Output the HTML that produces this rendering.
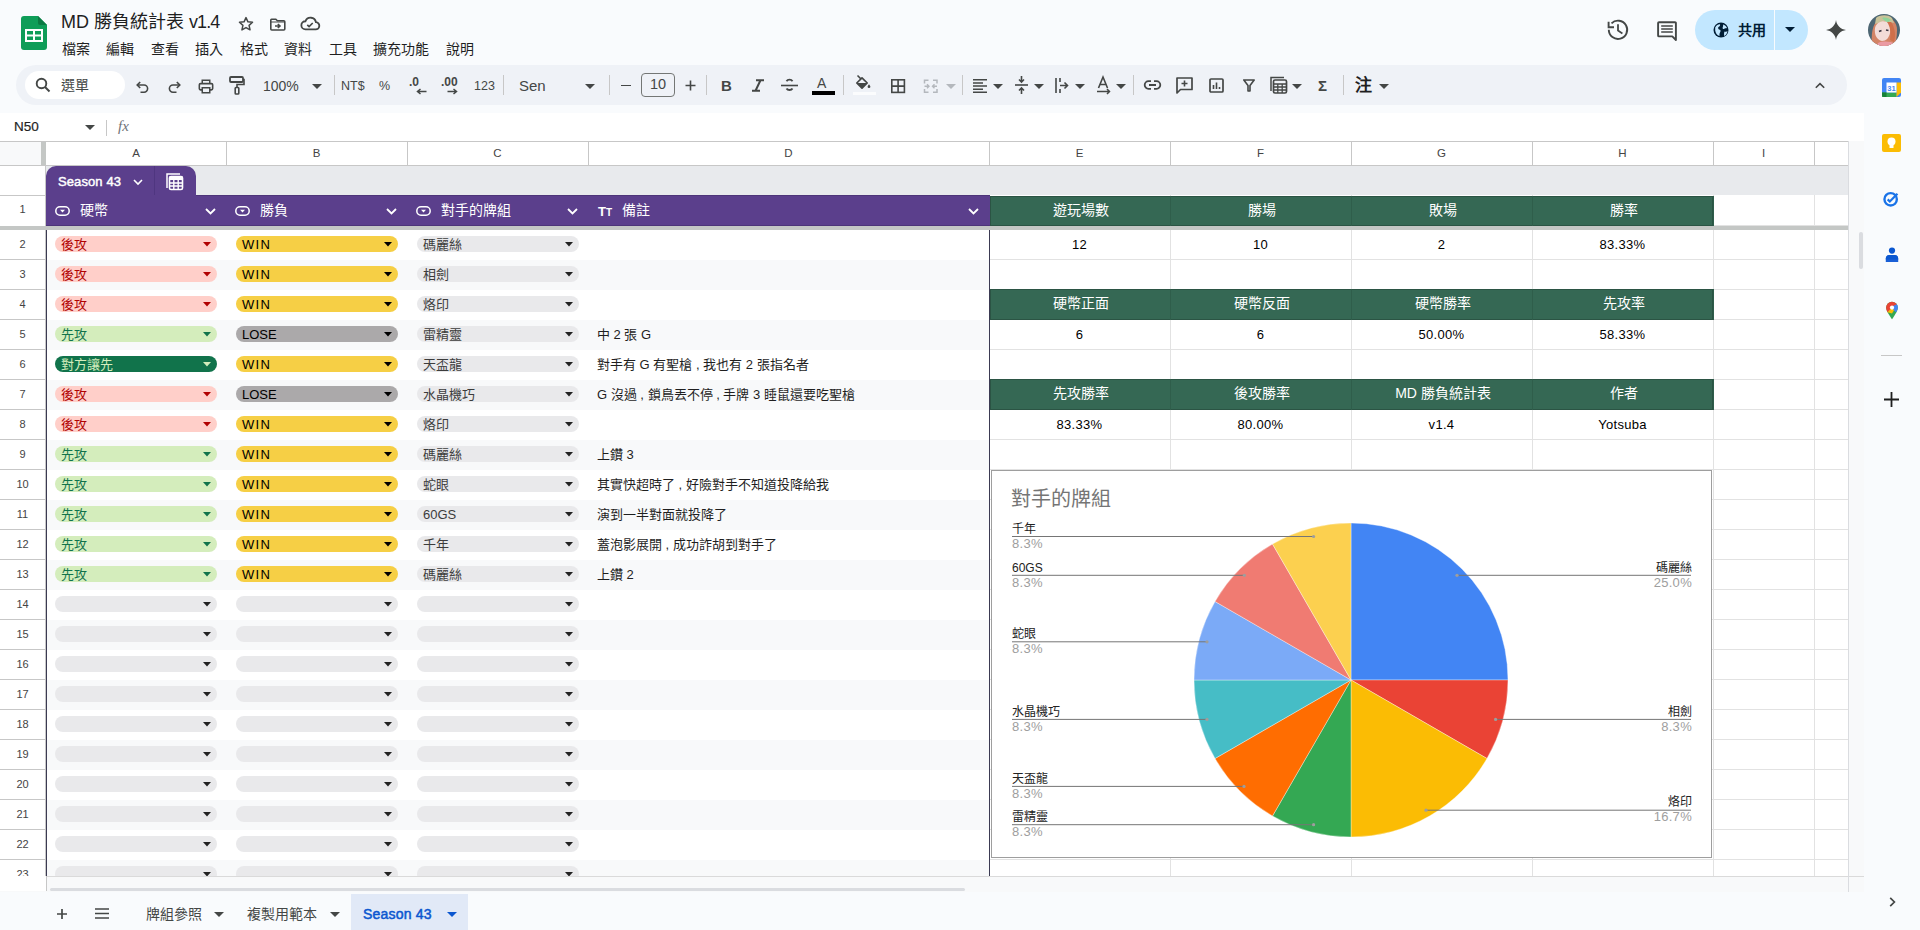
<!DOCTYPE html><html lang="zh-TW"><head><meta charset="utf-8"><title>MD</title><style>
*{margin:0;padding:0;box-sizing:border-box}
html,body{width:1920px;height:930px;overflow:hidden;background:#f9fbfd;font-family:"Liberation Sans",sans-serif;color:#1f1f1f}
.ab{position:absolute}
.t{position:absolute;white-space:nowrap;line-height:1}
svg{position:absolute;overflow:visible}
</style></head><body>
<svg style="left:21px;top:16px" width="26" height="34" viewBox="0 0 26 34"><path d="M3 0H17L26 9V31Q26 34 23 34H3Q0 34 0 31V3Q0 0 3 0Z" fill="#0f9d58"/><path d="M17 0L26 9H19Q17 9 17 7Z" fill="#0b7a43"/><rect x="5" y="14" width="16" height="11" fill="none" stroke="#fff" stroke-width="2"/><path d="M5 19.5H21M13 14V25" stroke="#fff" stroke-width="2"/></svg>
<div class="t" style="left:61px;top:13px;font-size:18px;color:#1f1f1f">MD 勝負統計表 <span style="letter-spacing:-0.9px">v1.4</span></div>
<svg style="left:237px;top:15px" width="18" height="18" viewBox="0 0 24 24"><path d="M12 3.5l2.6 5.6 6.1.6-4.6 4.1 1.3 6L12 16.8l-5.4 3 1.3-6L3.3 9.7l6.1-.6z" fill="none" stroke="#444746" stroke-width="2" stroke-linejoin="round"/></svg>
<svg style="left:270px;top:18px" width="16" height="13" viewBox="0 0 16 13"><path d="M1.6 1.2h4.2l1.6 1.6h6.4a1 1 0 0 1 1 1V11a1 1 0 0 1-1 1H1.8a1 1 0 0 1-1-1V2.2a1 1 0 0 1 .8-1z" fill="none" stroke="#444746" stroke-width="1.6"/><path d="M1 4h14" stroke="#444746" stroke-width="1"/><path d="M5 8h4.5M7.8 6l2.2 2-2.2 2" fill="none" stroke="#444746" stroke-width="1.6"/></svg>
<svg style="left:300px;top:16px" width="20" height="15" viewBox="0 0 22 16"><path d="M6 14.5h11a4 4 0 0 0 .5-8A6 6 0 0 0 6 5.5a4.5 4.5 0 0 0 0 9z" fill="none" stroke="#444746" stroke-width="2"/><path d="M8 9.5l2 2 4-4" fill="none" stroke="#444746" stroke-width="1.8"/></svg>
<div class="t" style="left:62px;top:42px;font-size:14px;color:#1f1f1f">檔案</div>
<div class="t" style="left:106px;top:42px;font-size:14px;color:#1f1f1f">編輯</div>
<div class="t" style="left:151px;top:42px;font-size:14px;color:#1f1f1f">查看</div>
<div class="t" style="left:195px;top:42px;font-size:14px;color:#1f1f1f">插入</div>
<div class="t" style="left:240px;top:42px;font-size:14px;color:#1f1f1f">格式</div>
<div class="t" style="left:284px;top:42px;font-size:14px;color:#1f1f1f">資料</div>
<div class="t" style="left:329px;top:42px;font-size:14px;color:#1f1f1f">工具</div>
<div class="t" style="left:373px;top:42px;font-size:14px;color:#1f1f1f">擴充功能</div>
<div class="t" style="left:446px;top:42px;font-size:14px;color:#1f1f1f">說明</div>
<svg style="left:0;top:0" width="1920" height="60" viewBox="0 0 1920 60"><path d="M1608.8 29.8A9.2 9.2 0 1 0 1611.5 23.3" fill="none" stroke="#444746" stroke-width="1.9"/><path d="M1608.6 21.8V27.3H1614" fill="none" stroke="#444746" stroke-width="1.9"/><path d="M1618 24.3V30.6L1622.4 33.4" fill="none" stroke="#444746" stroke-width="1.8"/><path d="M1659 22.2H1675a.9.9 0 0 1 .9.9V40l-3.6-3.6H1659a.9.9 0 0 1-.9-.9V23.1a.9.9 0 0 1 .9-.9z" fill="none" stroke="#444746" stroke-width="1.9" stroke-linejoin="round"/><path d="M1661.2 25.9H1672.8M1661.2 28.9H1672.8M1661.2 31.9H1672.8" stroke="#444746" stroke-width="1.5"/></svg>
<div class="ab" style="left:1695px;top:10px;width:113px;height:40px;border-radius:20px;background:#c2e7ff"></div>
<div class="ab" style="left:1774px;top:10px;width:1px;height:40px;background:#f9fbfd"></div>
<svg style="left:1713px;top:22px" width="16" height="16" viewBox="0 0 16 16"><circle cx="8" cy="8" r="7.5" fill="#001d35"/><path d="M2.2 5.5C3.5 3 5.5 2 7 2.2 7.5 3.5 6.5 4.5 5.5 5 4.5 6 5.5 7.5 7 7.8 8 8.2 7.5 10 6.8 11 6.3 12 6.6 13.2 6.5 14 4 13.2 2.5 11 2.2 8.5z M10 2.5c1.8.5 3.3 1.8 4 3.5-1 .3-2 0-2.6.7-.6.8-1.8.3-1.8-.8 0-1 .9-1.5.4-3.4z M11.5 9.5c1 .3 2.3.2 3-.3-.3 2-1.5 3.8-3.2 4.8-.3-1.5-.5-3 .2-4.5z" fill="#c2e7ff"/></svg>
<div class="t" style="left:1738px;top:23px;font-size:14px;font-weight:bold;color:#001d35">共用</div>
<svg style="left:1785px;top:27px" width="10" height="5" viewBox="0 0 10 5"><path d="M0 0h10L5 5z" fill="#001d35"/></svg>
<svg style="left:1826px;top:20px" width="20" height="20" viewBox="0 0 20 20"><path d="M10 0C10.6 5.3 14.7 9.4 20 10 14.7 10.6 10.6 14.7 10 20 9.4 14.7 5.3 10.6 0 10 5.3 9.4 9.4 5.3 10 0z" fill="#444746"/></svg>
<svg style="left:1868px;top:14px" width="32" height="32" viewBox="0 0 32 32"><defs><clipPath id="av"><circle cx="16" cy="16" r="16"/></clipPath></defs><g clip-path="url(#av)"><rect width="32" height="32" fill="#4d6673"/><path d="M4 32C3 20 4 7 14 4c9-2 15 4 15 12 0 7-1 12-3 16z" fill="#d38466"/><path d="M8 4c3-3 12-4 16 0l2 5-10-2-9 3z" fill="#c9c39a"/><path d="M14 4c3-1 7 0 9 2l-4 3z" fill="#8fd49a"/><path d="M7 14c1-5 7-8 12-6 3 2 4 6 3 11-1 5-4 8-8 8-5-1-8-6-7-13z" fill="#f3dcd8"/><path d="M10 29c5-2 12-2 17 1v2H9z" fill="#ea9aa3"/><path d="M11 17.5l2.5-1M18 16l2.5 .5" stroke="#3a3440" stroke-width="1.6"/><path d="M19 8c3 4 4 10 3 18l4 2c2-6 1-15-3-20z" fill="#cf6f4a"/></g></svg>
<div class="ab" style="left:16px;top:65px;width:1831px;height:40px;border-radius:20px;background:#eff2f7"></div>
<div class="ab" style="left:25px;top:71px;width:100px;height:28px;border-radius:14px;background:#fff"></div>
<svg style="left:35px;top:77px" width="16" height="16" viewBox="0 0 16 16"><circle cx="6.5" cy="6.5" r="4.8" fill="none" stroke="#444746" stroke-width="1.9"/><path d="M10 10l4.5 4.5" stroke="#444746" stroke-width="2"/></svg>
<div class="t" style="left:61px;top:78px;font-size:14px;color:#444746">選單</div>
<svg style="left:136px;top:81px" width="13" height="12" viewBox="0 0 13 12"><path d="M4.2 1L1.2 4l3 3" fill="none" stroke="#444746" stroke-width="1.6"/><path d="M1.5 4h6.5a3.6 3.6 0 0 1 0 7.2H4.5" fill="none" stroke="#444746" stroke-width="1.6"/></svg>
<svg style="left:168px;top:81px" width="13" height="12" viewBox="0 0 13 12"><path d="M8.8 1l3 3-3 3" fill="none" stroke="#444746" stroke-width="1.6"/><path d="M11.5 4H5a3.6 3.6 0 0 0 0 7.2h3.5" fill="none" stroke="#444746" stroke-width="1.6"/></svg>
<svg style="left:198px;top:79px" width="16" height="15" viewBox="0 0 18 18"><path d="M4.5 5V1.5h9V5" fill="none" stroke="#444746" stroke-width="1.8"/><rect x="1" y="5.5" width="16" height="7.5" rx="1.5" fill="none" stroke="#444746" stroke-width="1.9"/><rect x="4.5" y="10.5" width="9" height="6" fill="#eff2f7" stroke="#444746" stroke-width="1.8"/></svg>
<svg style="left:229px;top:76px" width="16" height="19" viewBox="0 0 16 19"><rect x="1" y="1" width="13" height="5" rx="1" fill="none" stroke="#444746" stroke-width="1.8"/><path d="M14 3.5h1v5H8v3" fill="none" stroke="#444746" stroke-width="1.6"/><rect x="6.2" y="11.5" width="3.6" height="6.5" rx=".8" fill="none" stroke="#444746" stroke-width="1.6"/></svg>
<div class="t" style="left:263px;top:79px;font-size:14px;color:#444746">100%</div>
<svg style="left:312px;top:84px" width="10" height="5" viewBox="0 0 10 5"><path d="M0 0h10L5 5z" fill="#444746"/></svg>
<div class="ab" style="left:334px;top:75px;width:1px;height:20px;background:#c7c7c7"></div>
<div class="t" style="left:341px;top:80px;font-size:12.5px;color:#444746">NT$</div>
<div class="t" style="left:379px;top:80px;font-size:12.5px;color:#444746">%</div>
<div class="t" style="left:409px;top:76px;font-size:12px;font-weight:bold;color:#444746">.0</div>
<svg style="left:416px;top:88px" width="11" height="7" viewBox="0 0 11 7"><path d="M10.5 3.5H2M4.5 1L1.5 3.5 4.5 6" fill="none" stroke="#444746" stroke-width="1.5"/></svg>
<div class="t" style="left:441px;top:76px;font-size:12px;font-weight:bold;color:#444746">.00</div>
<svg style="left:447px;top:88px" width="11" height="7" viewBox="0 0 11 7"><path d="M.5 3.5H9M6.5 1l3 2.5L6.5 6" fill="none" stroke="#444746" stroke-width="1.5"/></svg>
<div class="t" style="left:474px;top:80px;font-size:12.5px;color:#444746">123</div>
<div class="ab" style="left:503px;top:75px;width:1px;height:20px;background:#c7c7c7"></div>
<div class="t" style="left:519px;top:78px;font-size:15px;color:#444746">Sen</div>
<svg style="left:585px;top:84px" width="10" height="5" viewBox="0 0 10 5"><path d="M0 0h10L5 5z" fill="#444746"/></svg>
<div class="ab" style="left:609px;top:75px;width:1px;height:20px;background:#c7c7c7"></div>
<div class="ab" style="left:621px;top:84.5px;width:10px;height:1.6px;background:#444746"></div>
<div class="ab" style="left:641px;top:73px;width:34px;height:24px;border:1px solid #747775;border-radius:4px"></div>
<div class="t" style="left:650px;top:77px;font-size:14.5px;color:#444746">10</div>
<svg style="left:685px;top:80px" width="11" height="11" viewBox="0 0 11 11"><path d="M5.5 .5v10M.5 5.5h10" stroke="#444746" stroke-width="1.6"/></svg>
<div class="ab" style="left:706px;top:75px;width:1px;height:20px;background:#c7c7c7"></div>
<div class="t" style="left:721px;top:78px;font-size:15px;font-weight:bold;color:#444746">B</div>
<svg style="left:752px;top:79px" width="12" height="13" viewBox="0 0 12 13"><path d="M4 1.2h8M0 11.8h8M8.5 1.2L3.5 11.8" stroke="#444746" stroke-width="2" fill="none"/></svg>
<svg style="left:781px;top:78px" width="17" height="15" viewBox="0 0 17 15"><path d="M0 7.5h17" stroke="#444746" stroke-width="1.6"/><path d="M11.5 3.2a3.3 2.6 0 0 0-6 0M5.5 10.5a3.3 2.6 0 0 0 6 0" fill="none" stroke="#444746" stroke-width="1.8"/></svg>
<div class="t" style="left:817px;top:76px;font-size:14px;color:#444746">A</div>
<div class="ab" style="left:812px;top:91px;width:23px;height:4px;background:#000"></div>
<div class="ab" style="left:843px;top:75px;width:1px;height:20px;background:#c7c7c7"></div>
<svg style="left:0;top:60px" width="1000" height="45" viewBox="0 60 1000 45"><path d="M857.5 75.5L861 79" stroke="#444746" stroke-width="1.6"/><path d="M856.8 83L862 77.8 867.2 83 862 88.2z" fill="none" stroke="#444746" stroke-width="1.7" stroke-linejoin="round"/><path d="M856.8 83H867.2L862 88.2z" fill="#444746"/><path d="M869 84.2c0 0-1.4 1.6-1.4 2.5a1.4 1.4 0 0 0 2.8 0c0-.9-1.4-2.5-1.4-2.5z" fill="#444746"/><rect x="853" y="92" width="23" height="3" fill="#fbfcfd"/><rect x="891.8" y="79.8" width="12.6" height="12.6" fill="none" stroke="#444746" stroke-width="1.6"/><path d="M898.1 79.8V92.4M891.8 86.1H904.4" stroke="#444746" stroke-width="1.6"/><path d="M924.5 83.5V80.3H928.5M933 80.3H937V83.5M937 89V92.3H933M928.5 92.3H924.5V89" fill="none" stroke="#b4b8bd" stroke-width="1.5"/><path d="M924.5 86.3H929M927 84.3l2 2-2 2M937 86.3H932.5M934.5 84.3l-2 2 2 2" fill="none" stroke="#b4b8bd" stroke-width="1.4"/></svg>
<svg style="left:946px;top:84px" width="10" height="5" viewBox="0 0 10 5"><path d="M0 0h10L5 5z" fill="#b4b8bd"/></svg>
<div class="ab" style="left:962px;top:75px;width:1px;height:20px;background:#c7c7c7"></div>
<svg style="left:973px;top:79px" width="14" height="14" viewBox="0 0 14 14"><path d="M0 .8h14M0 4h10M0 7h14M0 10.2h10M0 13.2h14" stroke="#444746" stroke-width="1.5"/></svg>
<svg style="left:993px;top:84px" width="10" height="5" viewBox="0 0 10 5"><path d="M0 0h10L5 5z" fill="#444746"/></svg>
<svg style="left:1015px;top:76px" width="13" height="18" viewBox="0 0 13 18"><path d="M0 9h13" stroke="#444746" stroke-width="1.6"/><path d="M6.5 0v6M4 3.5l2.5 2.5L9 3.5M6.5 18v-6M4 14.5l2.5-2.5 2.5 2.5" fill="none" stroke="#444746" stroke-width="1.6"/></svg>
<svg style="left:1034px;top:84px" width="10" height="5" viewBox="0 0 10 5"><path d="M0 0h10L5 5z" fill="#444746"/></svg>
<svg style="left:1055px;top:78px" width="14" height="15" viewBox="0 0 14 15"><path d="M1 0v15M5 7.5h7M9.5 4.5l3 3-3 3M5 0v4M5 11v4" fill="none" stroke="#444746" stroke-width="1.6"/></svg>
<svg style="left:1075px;top:84px" width="10" height="5" viewBox="0 0 10 5"><path d="M0 0h10L5 5z" fill="#444746"/></svg>
<svg style="left:1097px;top:76px" width="14" height="19" viewBox="0 0 14 19"><path d="M1.5 12L6 1l4.5 11M3 8.5h6" fill="none" stroke="#444746" stroke-width="1.6"/><path d="M0 15.5h12M10 13l2.5 2.5L10 18" fill="none" stroke="#444746" stroke-width="1.5"/></svg>
<svg style="left:1116px;top:84px" width="10" height="5" viewBox="0 0 10 5"><path d="M0 0h10L5 5z" fill="#444746"/></svg>
<div class="ab" style="left:1133px;top:75px;width:1px;height:20px;background:#c7c7c7"></div>
<svg style="left:1144px;top:80px" width="17" height="10" viewBox="0 0 17 10"><path d="M7 1.2H4.5a3.8 3.8 0 0 0 0 7.6H7M10 1.2h2.5a3.8 3.8 0 0 1 0 7.6H10M5 5h7" fill="none" stroke="#444746" stroke-width="1.8"/></svg>
<svg style="left:1176px;top:77px" width="17" height="17" viewBox="0 0 17 17"><path d="M1 1h15v11.5H4.5L1 16z" fill="none" stroke="#444746" stroke-width="1.7" stroke-linejoin="round"/><path d="M8.5 3.5v6M5.5 6.5h6" stroke="#444746" stroke-width="1.6"/></svg>
<svg style="left:1209px;top:78px" width="15" height="15" viewBox="0 0 15 15"><rect x="1" y="1" width="13" height="13" rx="1" fill="none" stroke="#444746" stroke-width="1.7"/><path d="M4.5 11V7M7.5 11V4.5M10.5 11V9" stroke="#444746" stroke-width="1.6"/></svg>
<svg style="left:1243px;top:79px" width="12" height="13" viewBox="0 0 12 13"><path d="M.8 1h10.4L7 6.5V12H5V6.5z" fill="none" stroke="#444746" stroke-width="1.6" stroke-linejoin="round"/></svg>
<svg style="left:1270px;top:76px" width="17" height="18" viewBox="0 0 17 18"><path d="M1 15V1.5h13" fill="none" stroke="#444746" stroke-width="1.5"/><rect x="3.5" y="4" width="13" height="13" rx="1.5" fill="none" stroke="#444746" stroke-width="1.7"/><path d="M3.5 8h13M3.5 11h13M3.5 14h13M7.8 8v9M12.2 8v9" stroke="#444746" stroke-width="1.3"/></svg>
<svg style="left:1292px;top:84px" width="10" height="5" viewBox="0 0 10 5"><path d="M0 0h10L5 5z" fill="#444746"/></svg>
<div class="t" style="left:1318px;top:78px;font-size:15px;font-weight:bold;color:#444746">Σ</div>
<div class="ab" style="left:1343px;top:75px;width:1px;height:20px;background:#c7c7c7"></div>
<div class="t" style="left:1355px;top:77px;font-size:17px;font-weight:bold;color:#1f1f1f">注</div>
<svg style="left:1379px;top:84px" width="10" height="5" viewBox="0 0 10 5"><path d="M0 0h10L5 5z" fill="#444746"/></svg>
<svg style="left:1815px;top:82px" width="10" height="7" viewBox="0 0 10 7"><path d="M.8 5.8L5 1.6l4.2 4.2" fill="none" stroke="#444746" stroke-width="1.6"/></svg>
<div class="ab" style="left:0;top:113px;width:1864px;height:28px;background:#fff"></div>
<div class="t" style="left:14px;top:120px;font-size:13.5px;color:#1f1f1f;-webkit-text-stroke:0.2px #1f1f1f">N50</div>
<svg style="left:85px;top:125px" width="10" height="5" viewBox="0 0 10 5"><path d="M0 0h10L5 5z" fill="#444746"/></svg>
<div class="ab" style="left:106px;top:120px;width:1px;height:16px;background:#c7c7c7"></div>
<div class="t" style="left:118px;top:119px;font-size:15px;font-family:'Liberation Serif',serif;font-style:italic;color:#6f7378">fx</div>
<div class="ab" style="left:0;top:0;width:1920px;height:876px;overflow:hidden">
<div class="ab" style="left:0;top:141px;width:1848px;height:735px;background:#fff"></div>
<div class="ab" style="left:0;top:141px;width:1848px;height:1px;background:#c7c7c7"></div>
<div class="ab" style="left:0;top:142px;width:41px;height:24px;background:#f8f9fa"></div>
<div class="ab" style="left:41px;top:142px;width:5px;height:24px;background:#c4c7c5"></div>
<div class="ab" style="left:0;top:165px;width:1848px;height:1px;background:#c7c7c7"></div>
<div class="ab" style="left:226px;top:142px;width:1px;height:23px;background:#c7c7c7"></div>
<div class="t" style="left:46px;width:180px;text-align:center;top:148px;font-size:11.5px;color:#444">A</div>
<div class="ab" style="left:407px;top:142px;width:1px;height:23px;background:#c7c7c7"></div>
<div class="t" style="left:226px;width:181px;text-align:center;top:148px;font-size:11.5px;color:#444">B</div>
<div class="ab" style="left:588px;top:142px;width:1px;height:23px;background:#c7c7c7"></div>
<div class="t" style="left:407px;width:181px;text-align:center;top:148px;font-size:11.5px;color:#444">C</div>
<div class="ab" style="left:989px;top:142px;width:1px;height:23px;background:#c7c7c7"></div>
<div class="t" style="left:588px;width:401px;text-align:center;top:148px;font-size:11.5px;color:#444">D</div>
<div class="ab" style="left:1170px;top:142px;width:1px;height:23px;background:#c7c7c7"></div>
<div class="t" style="left:989px;width:181px;text-align:center;top:148px;font-size:11.5px;color:#444">E</div>
<div class="ab" style="left:1351px;top:142px;width:1px;height:23px;background:#c7c7c7"></div>
<div class="t" style="left:1170px;width:181px;text-align:center;top:148px;font-size:11.5px;color:#444">F</div>
<div class="ab" style="left:1532px;top:142px;width:1px;height:23px;background:#c7c7c7"></div>
<div class="t" style="left:1351px;width:181px;text-align:center;top:148px;font-size:11.5px;color:#444">G</div>
<div class="ab" style="left:1713px;top:142px;width:1px;height:23px;background:#c7c7c7"></div>
<div class="t" style="left:1532px;width:181px;text-align:center;top:148px;font-size:11.5px;color:#444">H</div>
<div class="ab" style="left:1814px;top:142px;width:1px;height:23px;background:#c7c7c7"></div>
<div class="t" style="left:1713px;width:101px;text-align:center;top:148px;font-size:11.5px;color:#444">I</div>
<div class="ab" style="left:1848px;top:142px;width:1px;height:23px;background:#c7c7c7"></div>
<div class="ab" style="left:0;top:195px;width:46px;height:1px;background:#c7c7c7"></div>
<div class="t" style="left:0;width:45px;text-align:center;top:204px;font-size:11px;color:#444">1</div>
<div class="ab" style="left:0;top:259px;width:46px;height:1px;background:#c7c7c7"></div>
<div class="t" style="left:0;width:45px;text-align:center;top:239px;font-size:11px;color:#444">2</div>
<div class="ab" style="left:0;top:289px;width:46px;height:1px;background:#c7c7c7"></div>
<div class="t" style="left:0;width:45px;text-align:center;top:269px;font-size:11px;color:#444">3</div>
<div class="ab" style="left:0;top:319px;width:46px;height:1px;background:#c7c7c7"></div>
<div class="t" style="left:0;width:45px;text-align:center;top:299px;font-size:11px;color:#444">4</div>
<div class="ab" style="left:0;top:349px;width:46px;height:1px;background:#c7c7c7"></div>
<div class="t" style="left:0;width:45px;text-align:center;top:329px;font-size:11px;color:#444">5</div>
<div class="ab" style="left:0;top:379px;width:46px;height:1px;background:#c7c7c7"></div>
<div class="t" style="left:0;width:45px;text-align:center;top:359px;font-size:11px;color:#444">6</div>
<div class="ab" style="left:0;top:409px;width:46px;height:1px;background:#c7c7c7"></div>
<div class="t" style="left:0;width:45px;text-align:center;top:389px;font-size:11px;color:#444">7</div>
<div class="ab" style="left:0;top:439px;width:46px;height:1px;background:#c7c7c7"></div>
<div class="t" style="left:0;width:45px;text-align:center;top:419px;font-size:11px;color:#444">8</div>
<div class="ab" style="left:0;top:469px;width:46px;height:1px;background:#c7c7c7"></div>
<div class="t" style="left:0;width:45px;text-align:center;top:449px;font-size:11px;color:#444">9</div>
<div class="ab" style="left:0;top:499px;width:46px;height:1px;background:#c7c7c7"></div>
<div class="t" style="left:0;width:45px;text-align:center;top:479px;font-size:11px;color:#444">10</div>
<div class="ab" style="left:0;top:529px;width:46px;height:1px;background:#c7c7c7"></div>
<div class="t" style="left:0;width:45px;text-align:center;top:509px;font-size:11px;color:#444">11</div>
<div class="ab" style="left:0;top:559px;width:46px;height:1px;background:#c7c7c7"></div>
<div class="t" style="left:0;width:45px;text-align:center;top:539px;font-size:11px;color:#444">12</div>
<div class="ab" style="left:0;top:589px;width:46px;height:1px;background:#c7c7c7"></div>
<div class="t" style="left:0;width:45px;text-align:center;top:569px;font-size:11px;color:#444">13</div>
<div class="ab" style="left:0;top:619px;width:46px;height:1px;background:#c7c7c7"></div>
<div class="t" style="left:0;width:45px;text-align:center;top:599px;font-size:11px;color:#444">14</div>
<div class="ab" style="left:0;top:649px;width:46px;height:1px;background:#c7c7c7"></div>
<div class="t" style="left:0;width:45px;text-align:center;top:629px;font-size:11px;color:#444">15</div>
<div class="ab" style="left:0;top:679px;width:46px;height:1px;background:#c7c7c7"></div>
<div class="t" style="left:0;width:45px;text-align:center;top:659px;font-size:11px;color:#444">16</div>
<div class="ab" style="left:0;top:709px;width:46px;height:1px;background:#c7c7c7"></div>
<div class="t" style="left:0;width:45px;text-align:center;top:689px;font-size:11px;color:#444">17</div>
<div class="ab" style="left:0;top:739px;width:46px;height:1px;background:#c7c7c7"></div>
<div class="t" style="left:0;width:45px;text-align:center;top:719px;font-size:11px;color:#444">18</div>
<div class="ab" style="left:0;top:769px;width:46px;height:1px;background:#c7c7c7"></div>
<div class="t" style="left:0;width:45px;text-align:center;top:749px;font-size:11px;color:#444">19</div>
<div class="ab" style="left:0;top:799px;width:46px;height:1px;background:#c7c7c7"></div>
<div class="t" style="left:0;width:45px;text-align:center;top:779px;font-size:11px;color:#444">20</div>
<div class="ab" style="left:0;top:829px;width:46px;height:1px;background:#c7c7c7"></div>
<div class="t" style="left:0;width:45px;text-align:center;top:809px;font-size:11px;color:#444">21</div>
<div class="ab" style="left:0;top:859px;width:46px;height:1px;background:#c7c7c7"></div>
<div class="t" style="left:0;width:45px;text-align:center;top:839px;font-size:11px;color:#444">22</div>
<div class="ab" style="left:0;top:889px;width:46px;height:1px;background:#c7c7c7"></div>
<div class="t" style="left:0;width:45px;text-align:center;top:869px;font-size:11px;color:#444">23</div>
<div class="ab" style="left:45px;top:166px;width:1px;height:710px;background:#c7c7c7"></div>
<div class="ab" style="left:46px;top:166px;width:1802px;height:29px;background:#e8eaed"></div>
<div class="ab" style="left:46px;top:166px;width:150px;height:30px;background:#5b3f8c;border-radius:10px 10px 0 0"></div>
<div class="ab" style="left:154px;top:166px;width:1px;height:29px;background:#4f3680"></div>
<div class="t" style="left:58px;top:175px;font-size:13px;color:#fff;-webkit-text-stroke:0.45px #fff;letter-spacing:0.1px">Season 43</div>
<svg style="left:133px;top:179px" width="10" height="6" viewBox="0 0 10 6"><path d="M1 1l4 4 4-4" fill="none" stroke="#fff" stroke-width="1.6"/></svg>
<svg style="left:166px;top:173px" width="17" height="17" viewBox="0 0 17 17"><path d="M1 15V1h13" fill="none" stroke="#fff" stroke-width="1.5"/><rect x="3.5" y="3.5" width="13" height="13" rx="1.5" fill="none" stroke="#fff" stroke-width="1.6"/><rect x="3.5" y="3.5" width="13" height="3.5" fill="#fff"/><path d="M3.5 10h13M3.5 13h13M7.8 7v9.5M12.2 7v9.5" stroke="#fff" stroke-width="1.4"/></svg>
<div class="ab" style="left:989px;top:225px;width:859px;height:1px;background:#e2e2e2"></div>
<div class="ab" style="left:989px;top:259px;width:859px;height:1px;background:#e2e2e2"></div>
<div class="ab" style="left:989px;top:289px;width:859px;height:1px;background:#e2e2e2"></div>
<div class="ab" style="left:989px;top:319px;width:859px;height:1px;background:#e2e2e2"></div>
<div class="ab" style="left:989px;top:349px;width:859px;height:1px;background:#e2e2e2"></div>
<div class="ab" style="left:989px;top:379px;width:859px;height:1px;background:#e2e2e2"></div>
<div class="ab" style="left:989px;top:409px;width:859px;height:1px;background:#e2e2e2"></div>
<div class="ab" style="left:989px;top:439px;width:859px;height:1px;background:#e2e2e2"></div>
<div class="ab" style="left:989px;top:469px;width:859px;height:1px;background:#e2e2e2"></div>
<div class="ab" style="left:989px;top:499px;width:859px;height:1px;background:#e2e2e2"></div>
<div class="ab" style="left:989px;top:529px;width:859px;height:1px;background:#e2e2e2"></div>
<div class="ab" style="left:989px;top:559px;width:859px;height:1px;background:#e2e2e2"></div>
<div class="ab" style="left:989px;top:589px;width:859px;height:1px;background:#e2e2e2"></div>
<div class="ab" style="left:989px;top:619px;width:859px;height:1px;background:#e2e2e2"></div>
<div class="ab" style="left:989px;top:649px;width:859px;height:1px;background:#e2e2e2"></div>
<div class="ab" style="left:989px;top:679px;width:859px;height:1px;background:#e2e2e2"></div>
<div class="ab" style="left:989px;top:709px;width:859px;height:1px;background:#e2e2e2"></div>
<div class="ab" style="left:989px;top:739px;width:859px;height:1px;background:#e2e2e2"></div>
<div class="ab" style="left:989px;top:769px;width:859px;height:1px;background:#e2e2e2"></div>
<div class="ab" style="left:989px;top:799px;width:859px;height:1px;background:#e2e2e2"></div>
<div class="ab" style="left:989px;top:829px;width:859px;height:1px;background:#e2e2e2"></div>
<div class="ab" style="left:989px;top:859px;width:859px;height:1px;background:#e2e2e2"></div>
<div class="ab" style="left:989px;top:889px;width:859px;height:1px;background:#e2e2e2"></div>
<div class="ab" style="left:1170px;top:195px;width:1px;height:681px;background:#e2e2e2"></div>
<div class="ab" style="left:1351px;top:195px;width:1px;height:681px;background:#e2e2e2"></div>
<div class="ab" style="left:1532px;top:195px;width:1px;height:681px;background:#e2e2e2"></div>
<div class="ab" style="left:1713px;top:195px;width:1px;height:681px;background:#e2e2e2"></div>
<div class="ab" style="left:1814px;top:195px;width:1px;height:681px;background:#e2e2e2"></div>
<div class="ab" style="left:1848px;top:195px;width:1px;height:681px;background:#e2e2e2"></div>
<div class="ab" style="left:46px;top:195px;width:944px;height:31px;background:#5b3f8c"></div>
<svg style="left:55px;top:206px" width="15" height="10" viewBox="0 0 15 10"><rect x=".8" y=".8" width="13.4" height="8.4" rx="4.2" fill="none" stroke="#fff" stroke-width="1.5"/><path d="M5 3.8h5L7.5 6.5z" fill="#fff"/></svg>
<div class="t" style="left:80px;top:203px;font-size:14px;color:#fff">硬幣</div>
<svg style="left:205px;top:208px" width="11" height="7" viewBox="0 0 11 7"><path d="M1 1l4.5 4.5L10 1" fill="none" stroke="#fff" stroke-width="1.8"/></svg>
<svg style="left:235px;top:206px" width="15" height="10" viewBox="0 0 15 10"><rect x=".8" y=".8" width="13.4" height="8.4" rx="4.2" fill="none" stroke="#fff" stroke-width="1.5"/><path d="M5 3.8h5L7.5 6.5z" fill="#fff"/></svg>
<div class="t" style="left:260px;top:203px;font-size:14px;color:#fff">勝負</div>
<svg style="left:386px;top:208px" width="11" height="7" viewBox="0 0 11 7"><path d="M1 1l4.5 4.5L10 1" fill="none" stroke="#fff" stroke-width="1.8"/></svg>
<svg style="left:416px;top:206px" width="15" height="10" viewBox="0 0 15 10"><rect x=".8" y=".8" width="13.4" height="8.4" rx="4.2" fill="none" stroke="#fff" stroke-width="1.5"/><path d="M5 3.8h5L7.5 6.5z" fill="#fff"/></svg>
<div class="t" style="left:441px;top:203px;font-size:14px;color:#fff">對手的牌組</div>
<svg style="left:567px;top:208px" width="11" height="7" viewBox="0 0 11 7"><path d="M1 1l4.5 4.5L10 1" fill="none" stroke="#fff" stroke-width="1.8"/></svg>
<div class="t" style="left:598px;top:205px;font-size:13px;font-weight:bold;color:#fff">T<span style="font-size:10px">T</span></div>
<div class="t" style="left:622px;top:203px;font-size:14px;color:#fff">備註</div>
<svg style="left:968px;top:208px" width="11" height="7" viewBox="0 0 11 7"><path d="M1 1l4.5 4.5L10 1" fill="none" stroke="#fff" stroke-width="1.8"/></svg>
<div class="ab" style="left:196px;top:195px;width:794px;height:1px;background:#4d3579"></div>
<div class="ab" style="left:46px;top:225px;width:944px;height:1px;background:#4d3579"></div>
<div class="ab" style="left:0;top:226px;width:1864px;height:4px;background:#c4c7c5"></div>
<div class="ab" style="left:46px;top:230px;width:943px;height:30px;background:#fff"></div>
<div class="ab" style="left:46px;top:260px;width:943px;height:30px;background:#f8f9fa"></div>
<div class="ab" style="left:46px;top:290px;width:943px;height:30px;background:#fff"></div>
<div class="ab" style="left:46px;top:320px;width:943px;height:30px;background:#f8f9fa"></div>
<div class="ab" style="left:46px;top:350px;width:943px;height:30px;background:#fff"></div>
<div class="ab" style="left:46px;top:380px;width:943px;height:30px;background:#f8f9fa"></div>
<div class="ab" style="left:46px;top:410px;width:943px;height:30px;background:#fff"></div>
<div class="ab" style="left:46px;top:440px;width:943px;height:30px;background:#f8f9fa"></div>
<div class="ab" style="left:46px;top:470px;width:943px;height:30px;background:#fff"></div>
<div class="ab" style="left:46px;top:500px;width:943px;height:30px;background:#f8f9fa"></div>
<div class="ab" style="left:46px;top:530px;width:943px;height:30px;background:#fff"></div>
<div class="ab" style="left:46px;top:560px;width:943px;height:30px;background:#f8f9fa"></div>
<div class="ab" style="left:46px;top:590px;width:943px;height:30px;background:#fff"></div>
<div class="ab" style="left:46px;top:620px;width:943px;height:30px;background:#f8f9fa"></div>
<div class="ab" style="left:46px;top:650px;width:943px;height:30px;background:#fff"></div>
<div class="ab" style="left:46px;top:680px;width:943px;height:30px;background:#f8f9fa"></div>
<div class="ab" style="left:46px;top:710px;width:943px;height:30px;background:#fff"></div>
<div class="ab" style="left:46px;top:740px;width:943px;height:30px;background:#f8f9fa"></div>
<div class="ab" style="left:46px;top:770px;width:943px;height:30px;background:#fff"></div>
<div class="ab" style="left:46px;top:800px;width:943px;height:30px;background:#f8f9fa"></div>
<div class="ab" style="left:46px;top:830px;width:943px;height:30px;background:#fff"></div>
<div class="ab" style="left:46px;top:860px;width:943px;height:16px;background:#f8f9fa"></div>
<div class="ab" style="left:46px;top:890px;width:943px;height:-14px;background:#fff"></div>
<div class="ab" style="left:46px;top:230px;width:1px;height:646px;background:#3b3a52"></div>
<div class="ab" style="left:989px;top:230px;width:1px;height:646px;background:#3b3a52"></div>
<div class="ab" style="left:55px;top:236px;width:162px;height:16px;border-radius:8px;background:#ffcfc9"></div>
<div class="t" style="left:61px;top:238px;font-size:13px;color:#b10202;">後攻</div>
<svg style="left:202.5px;top:242px" width="8" height="4.5" viewBox="0 0 8 4.5"><path d="M0 0h8L4 4.5z" fill="#b10202"/></svg>
<div class="ab" style="left:236px;top:236px;width:162px;height:16px;border-radius:8px;background:#f6cf45"></div>
<div class="t" style="left:242px;top:238px;font-size:13px;color:#000;letter-spacing:1.3px;">WIN</div>
<svg style="left:383.5px;top:242px" width="8" height="4.5" viewBox="0 0 8 4.5"><path d="M0 0h8L4 4.5z" fill="#000"/></svg>
<div class="ab" style="left:417px;top:236px;width:162px;height:16px;border-radius:8px;background:#e9e9eb"></div>
<div class="t" style="left:423px;top:238px;font-size:13px;color:#3c3c3c;">碼麗絲</div>
<svg style="left:564.5px;top:242px" width="8" height="4.5" viewBox="0 0 8 4.5"><path d="M0 0h8L4 4.5z" fill="#222"/></svg>
<div class="ab" style="left:55px;top:266px;width:162px;height:16px;border-radius:8px;background:#ffcfc9"></div>
<div class="t" style="left:61px;top:268px;font-size:13px;color:#b10202;">後攻</div>
<svg style="left:202.5px;top:272px" width="8" height="4.5" viewBox="0 0 8 4.5"><path d="M0 0h8L4 4.5z" fill="#b10202"/></svg>
<div class="ab" style="left:236px;top:266px;width:162px;height:16px;border-radius:8px;background:#f6cf45"></div>
<div class="t" style="left:242px;top:268px;font-size:13px;color:#000;letter-spacing:1.3px;">WIN</div>
<svg style="left:383.5px;top:272px" width="8" height="4.5" viewBox="0 0 8 4.5"><path d="M0 0h8L4 4.5z" fill="#000"/></svg>
<div class="ab" style="left:417px;top:266px;width:162px;height:16px;border-radius:8px;background:#e9e9eb"></div>
<div class="t" style="left:423px;top:268px;font-size:13px;color:#3c3c3c;">相劍</div>
<svg style="left:564.5px;top:272px" width="8" height="4.5" viewBox="0 0 8 4.5"><path d="M0 0h8L4 4.5z" fill="#222"/></svg>
<div class="ab" style="left:55px;top:296px;width:162px;height:16px;border-radius:8px;background:#ffcfc9"></div>
<div class="t" style="left:61px;top:298px;font-size:13px;color:#b10202;">後攻</div>
<svg style="left:202.5px;top:302px" width="8" height="4.5" viewBox="0 0 8 4.5"><path d="M0 0h8L4 4.5z" fill="#b10202"/></svg>
<div class="ab" style="left:236px;top:296px;width:162px;height:16px;border-radius:8px;background:#f6cf45"></div>
<div class="t" style="left:242px;top:298px;font-size:13px;color:#000;letter-spacing:1.3px;">WIN</div>
<svg style="left:383.5px;top:302px" width="8" height="4.5" viewBox="0 0 8 4.5"><path d="M0 0h8L4 4.5z" fill="#000"/></svg>
<div class="ab" style="left:417px;top:296px;width:162px;height:16px;border-radius:8px;background:#e9e9eb"></div>
<div class="t" style="left:423px;top:298px;font-size:13px;color:#3c3c3c;">烙印</div>
<svg style="left:564.5px;top:302px" width="8" height="4.5" viewBox="0 0 8 4.5"><path d="M0 0h8L4 4.5z" fill="#222"/></svg>
<div class="ab" style="left:55px;top:326px;width:162px;height:16px;border-radius:8px;background:#d4edbc"></div>
<div class="t" style="left:61px;top:328px;font-size:13px;color:#11734b;">先攻</div>
<svg style="left:202.5px;top:332px" width="8" height="4.5" viewBox="0 0 8 4.5"><path d="M0 0h8L4 4.5z" fill="#11734b"/></svg>
<div class="ab" style="left:236px;top:326px;width:162px;height:16px;border-radius:8px;background:#aba9aa"></div>
<div class="t" style="left:242px;top:328px;font-size:13px;color:#000;letter-spacing:0;">LOSE</div>
<svg style="left:383.5px;top:332px" width="8" height="4.5" viewBox="0 0 8 4.5"><path d="M0 0h8L4 4.5z" fill="#000"/></svg>
<div class="ab" style="left:417px;top:326px;width:162px;height:16px;border-radius:8px;background:#e9e9eb"></div>
<div class="t" style="left:423px;top:328px;font-size:13px;color:#3c3c3c;">雷精靈</div>
<svg style="left:564.5px;top:332px" width="8" height="4.5" viewBox="0 0 8 4.5"><path d="M0 0h8L4 4.5z" fill="#222"/></svg>
<div class="t" style="left:597px;top:328px;font-size:13px;color:#1f1f1f">中 2 張 G</div>
<div class="ab" style="left:55px;top:356px;width:162px;height:16px;border-radius:8px;background:#11734b"></div>
<div class="t" style="left:61px;top:358px;font-size:13px;color:#d4edbc;">對方讓先</div>
<svg style="left:202.5px;top:362px" width="8" height="4.5" viewBox="0 0 8 4.5"><path d="M0 0h8L4 4.5z" fill="#d4edbc"/></svg>
<div class="ab" style="left:236px;top:356px;width:162px;height:16px;border-radius:8px;background:#f6cf45"></div>
<div class="t" style="left:242px;top:358px;font-size:13px;color:#000;letter-spacing:1.3px;">WIN</div>
<svg style="left:383.5px;top:362px" width="8" height="4.5" viewBox="0 0 8 4.5"><path d="M0 0h8L4 4.5z" fill="#000"/></svg>
<div class="ab" style="left:417px;top:356px;width:162px;height:16px;border-radius:8px;background:#e9e9eb"></div>
<div class="t" style="left:423px;top:358px;font-size:13px;color:#3c3c3c;">天盃龍</div>
<svg style="left:564.5px;top:362px" width="8" height="4.5" viewBox="0 0 8 4.5"><path d="M0 0h8L4 4.5z" fill="#222"/></svg>
<div class="t" style="left:597px;top:358px;font-size:13px;color:#1f1f1f">對手有 G 有聖槍 , 我也有 2 張指名者</div>
<div class="ab" style="left:55px;top:386px;width:162px;height:16px;border-radius:8px;background:#ffcfc9"></div>
<div class="t" style="left:61px;top:388px;font-size:13px;color:#b10202;">後攻</div>
<svg style="left:202.5px;top:392px" width="8" height="4.5" viewBox="0 0 8 4.5"><path d="M0 0h8L4 4.5z" fill="#b10202"/></svg>
<div class="ab" style="left:236px;top:386px;width:162px;height:16px;border-radius:8px;background:#aba9aa"></div>
<div class="t" style="left:242px;top:388px;font-size:13px;color:#000;letter-spacing:0;">LOSE</div>
<svg style="left:383.5px;top:392px" width="8" height="4.5" viewBox="0 0 8 4.5"><path d="M0 0h8L4 4.5z" fill="#000"/></svg>
<div class="ab" style="left:417px;top:386px;width:162px;height:16px;border-radius:8px;background:#e9e9eb"></div>
<div class="t" style="left:423px;top:388px;font-size:13px;color:#3c3c3c;">水晶機巧</div>
<svg style="left:564.5px;top:392px" width="8" height="4.5" viewBox="0 0 8 4.5"><path d="M0 0h8L4 4.5z" fill="#222"/></svg>
<div class="t" style="left:597px;top:388px;font-size:13px;color:#1f1f1f">G 沒過 , 鎖鳥丟不停 , 手牌 3 睡鼠還要吃聖槍</div>
<div class="ab" style="left:55px;top:416px;width:162px;height:16px;border-radius:8px;background:#ffcfc9"></div>
<div class="t" style="left:61px;top:418px;font-size:13px;color:#b10202;">後攻</div>
<svg style="left:202.5px;top:422px" width="8" height="4.5" viewBox="0 0 8 4.5"><path d="M0 0h8L4 4.5z" fill="#b10202"/></svg>
<div class="ab" style="left:236px;top:416px;width:162px;height:16px;border-radius:8px;background:#f6cf45"></div>
<div class="t" style="left:242px;top:418px;font-size:13px;color:#000;letter-spacing:1.3px;">WIN</div>
<svg style="left:383.5px;top:422px" width="8" height="4.5" viewBox="0 0 8 4.5"><path d="M0 0h8L4 4.5z" fill="#000"/></svg>
<div class="ab" style="left:417px;top:416px;width:162px;height:16px;border-radius:8px;background:#e9e9eb"></div>
<div class="t" style="left:423px;top:418px;font-size:13px;color:#3c3c3c;">烙印</div>
<svg style="left:564.5px;top:422px" width="8" height="4.5" viewBox="0 0 8 4.5"><path d="M0 0h8L4 4.5z" fill="#222"/></svg>
<div class="ab" style="left:55px;top:446px;width:162px;height:16px;border-radius:8px;background:#d4edbc"></div>
<div class="t" style="left:61px;top:448px;font-size:13px;color:#11734b;">先攻</div>
<svg style="left:202.5px;top:452px" width="8" height="4.5" viewBox="0 0 8 4.5"><path d="M0 0h8L4 4.5z" fill="#11734b"/></svg>
<div class="ab" style="left:236px;top:446px;width:162px;height:16px;border-radius:8px;background:#f6cf45"></div>
<div class="t" style="left:242px;top:448px;font-size:13px;color:#000;letter-spacing:1.3px;">WIN</div>
<svg style="left:383.5px;top:452px" width="8" height="4.5" viewBox="0 0 8 4.5"><path d="M0 0h8L4 4.5z" fill="#000"/></svg>
<div class="ab" style="left:417px;top:446px;width:162px;height:16px;border-radius:8px;background:#e9e9eb"></div>
<div class="t" style="left:423px;top:448px;font-size:13px;color:#3c3c3c;">碼麗絲</div>
<svg style="left:564.5px;top:452px" width="8" height="4.5" viewBox="0 0 8 4.5"><path d="M0 0h8L4 4.5z" fill="#222"/></svg>
<div class="t" style="left:597px;top:448px;font-size:13px;color:#1f1f1f">上鑽 3</div>
<div class="ab" style="left:55px;top:476px;width:162px;height:16px;border-radius:8px;background:#d4edbc"></div>
<div class="t" style="left:61px;top:478px;font-size:13px;color:#11734b;">先攻</div>
<svg style="left:202.5px;top:482px" width="8" height="4.5" viewBox="0 0 8 4.5"><path d="M0 0h8L4 4.5z" fill="#11734b"/></svg>
<div class="ab" style="left:236px;top:476px;width:162px;height:16px;border-radius:8px;background:#f6cf45"></div>
<div class="t" style="left:242px;top:478px;font-size:13px;color:#000;letter-spacing:1.3px;">WIN</div>
<svg style="left:383.5px;top:482px" width="8" height="4.5" viewBox="0 0 8 4.5"><path d="M0 0h8L4 4.5z" fill="#000"/></svg>
<div class="ab" style="left:417px;top:476px;width:162px;height:16px;border-radius:8px;background:#e9e9eb"></div>
<div class="t" style="left:423px;top:478px;font-size:13px;color:#3c3c3c;">蛇眼</div>
<svg style="left:564.5px;top:482px" width="8" height="4.5" viewBox="0 0 8 4.5"><path d="M0 0h8L4 4.5z" fill="#222"/></svg>
<div class="t" style="left:597px;top:478px;font-size:13px;color:#1f1f1f">其實快超時了 , 好險對手不知道投降給我</div>
<div class="ab" style="left:55px;top:506px;width:162px;height:16px;border-radius:8px;background:#d4edbc"></div>
<div class="t" style="left:61px;top:508px;font-size:13px;color:#11734b;">先攻</div>
<svg style="left:202.5px;top:512px" width="8" height="4.5" viewBox="0 0 8 4.5"><path d="M0 0h8L4 4.5z" fill="#11734b"/></svg>
<div class="ab" style="left:236px;top:506px;width:162px;height:16px;border-radius:8px;background:#f6cf45"></div>
<div class="t" style="left:242px;top:508px;font-size:13px;color:#000;letter-spacing:1.3px;">WIN</div>
<svg style="left:383.5px;top:512px" width="8" height="4.5" viewBox="0 0 8 4.5"><path d="M0 0h8L4 4.5z" fill="#000"/></svg>
<div class="ab" style="left:417px;top:506px;width:162px;height:16px;border-radius:8px;background:#e9e9eb"></div>
<div class="t" style="left:423px;top:508px;font-size:13px;color:#3c3c3c;">60GS</div>
<svg style="left:564.5px;top:512px" width="8" height="4.5" viewBox="0 0 8 4.5"><path d="M0 0h8L4 4.5z" fill="#222"/></svg>
<div class="t" style="left:597px;top:508px;font-size:13px;color:#1f1f1f">演到一半對面就投降了</div>
<div class="ab" style="left:55px;top:536px;width:162px;height:16px;border-radius:8px;background:#d4edbc"></div>
<div class="t" style="left:61px;top:538px;font-size:13px;color:#11734b;">先攻</div>
<svg style="left:202.5px;top:542px" width="8" height="4.5" viewBox="0 0 8 4.5"><path d="M0 0h8L4 4.5z" fill="#11734b"/></svg>
<div class="ab" style="left:236px;top:536px;width:162px;height:16px;border-radius:8px;background:#f6cf45"></div>
<div class="t" style="left:242px;top:538px;font-size:13px;color:#000;letter-spacing:1.3px;">WIN</div>
<svg style="left:383.5px;top:542px" width="8" height="4.5" viewBox="0 0 8 4.5"><path d="M0 0h8L4 4.5z" fill="#000"/></svg>
<div class="ab" style="left:417px;top:536px;width:162px;height:16px;border-radius:8px;background:#e9e9eb"></div>
<div class="t" style="left:423px;top:538px;font-size:13px;color:#3c3c3c;">千年</div>
<svg style="left:564.5px;top:542px" width="8" height="4.5" viewBox="0 0 8 4.5"><path d="M0 0h8L4 4.5z" fill="#222"/></svg>
<div class="t" style="left:597px;top:538px;font-size:13px;color:#1f1f1f">蓋泡影展開 , 成功詐胡到對手了</div>
<div class="ab" style="left:55px;top:566px;width:162px;height:16px;border-radius:8px;background:#d4edbc"></div>
<div class="t" style="left:61px;top:568px;font-size:13px;color:#11734b;">先攻</div>
<svg style="left:202.5px;top:572px" width="8" height="4.5" viewBox="0 0 8 4.5"><path d="M0 0h8L4 4.5z" fill="#11734b"/></svg>
<div class="ab" style="left:236px;top:566px;width:162px;height:16px;border-radius:8px;background:#f6cf45"></div>
<div class="t" style="left:242px;top:568px;font-size:13px;color:#000;letter-spacing:1.3px;">WIN</div>
<svg style="left:383.5px;top:572px" width="8" height="4.5" viewBox="0 0 8 4.5"><path d="M0 0h8L4 4.5z" fill="#000"/></svg>
<div class="ab" style="left:417px;top:566px;width:162px;height:16px;border-radius:8px;background:#e9e9eb"></div>
<div class="t" style="left:423px;top:568px;font-size:13px;color:#3c3c3c;">碼麗絲</div>
<svg style="left:564.5px;top:572px" width="8" height="4.5" viewBox="0 0 8 4.5"><path d="M0 0h8L4 4.5z" fill="#222"/></svg>
<div class="t" style="left:597px;top:568px;font-size:13px;color:#1f1f1f">上鑽 2</div>
<div class="ab" style="left:55px;top:596px;width:162px;height:16px;border-radius:8px;background:#e9e9eb"></div>
<svg style="left:202.5px;top:602px" width="8" height="4.5" viewBox="0 0 8 4.5"><path d="M0 0h8L4 4.5z" fill="#222"/></svg>
<div class="ab" style="left:236px;top:596px;width:162px;height:16px;border-radius:8px;background:#e9e9eb"></div>
<svg style="left:383.5px;top:602px" width="8" height="4.5" viewBox="0 0 8 4.5"><path d="M0 0h8L4 4.5z" fill="#222"/></svg>
<div class="ab" style="left:417px;top:596px;width:162px;height:16px;border-radius:8px;background:#e9e9eb"></div>
<svg style="left:564.5px;top:602px" width="8" height="4.5" viewBox="0 0 8 4.5"><path d="M0 0h8L4 4.5z" fill="#222"/></svg>
<div class="ab" style="left:55px;top:626px;width:162px;height:16px;border-radius:8px;background:#e9e9eb"></div>
<svg style="left:202.5px;top:632px" width="8" height="4.5" viewBox="0 0 8 4.5"><path d="M0 0h8L4 4.5z" fill="#222"/></svg>
<div class="ab" style="left:236px;top:626px;width:162px;height:16px;border-radius:8px;background:#e9e9eb"></div>
<svg style="left:383.5px;top:632px" width="8" height="4.5" viewBox="0 0 8 4.5"><path d="M0 0h8L4 4.5z" fill="#222"/></svg>
<div class="ab" style="left:417px;top:626px;width:162px;height:16px;border-radius:8px;background:#e9e9eb"></div>
<svg style="left:564.5px;top:632px" width="8" height="4.5" viewBox="0 0 8 4.5"><path d="M0 0h8L4 4.5z" fill="#222"/></svg>
<div class="ab" style="left:55px;top:656px;width:162px;height:16px;border-radius:8px;background:#e9e9eb"></div>
<svg style="left:202.5px;top:662px" width="8" height="4.5" viewBox="0 0 8 4.5"><path d="M0 0h8L4 4.5z" fill="#222"/></svg>
<div class="ab" style="left:236px;top:656px;width:162px;height:16px;border-radius:8px;background:#e9e9eb"></div>
<svg style="left:383.5px;top:662px" width="8" height="4.5" viewBox="0 0 8 4.5"><path d="M0 0h8L4 4.5z" fill="#222"/></svg>
<div class="ab" style="left:417px;top:656px;width:162px;height:16px;border-radius:8px;background:#e9e9eb"></div>
<svg style="left:564.5px;top:662px" width="8" height="4.5" viewBox="0 0 8 4.5"><path d="M0 0h8L4 4.5z" fill="#222"/></svg>
<div class="ab" style="left:55px;top:686px;width:162px;height:16px;border-radius:8px;background:#e9e9eb"></div>
<svg style="left:202.5px;top:692px" width="8" height="4.5" viewBox="0 0 8 4.5"><path d="M0 0h8L4 4.5z" fill="#222"/></svg>
<div class="ab" style="left:236px;top:686px;width:162px;height:16px;border-radius:8px;background:#e9e9eb"></div>
<svg style="left:383.5px;top:692px" width="8" height="4.5" viewBox="0 0 8 4.5"><path d="M0 0h8L4 4.5z" fill="#222"/></svg>
<div class="ab" style="left:417px;top:686px;width:162px;height:16px;border-radius:8px;background:#e9e9eb"></div>
<svg style="left:564.5px;top:692px" width="8" height="4.5" viewBox="0 0 8 4.5"><path d="M0 0h8L4 4.5z" fill="#222"/></svg>
<div class="ab" style="left:55px;top:716px;width:162px;height:16px;border-radius:8px;background:#e9e9eb"></div>
<svg style="left:202.5px;top:722px" width="8" height="4.5" viewBox="0 0 8 4.5"><path d="M0 0h8L4 4.5z" fill="#222"/></svg>
<div class="ab" style="left:236px;top:716px;width:162px;height:16px;border-radius:8px;background:#e9e9eb"></div>
<svg style="left:383.5px;top:722px" width="8" height="4.5" viewBox="0 0 8 4.5"><path d="M0 0h8L4 4.5z" fill="#222"/></svg>
<div class="ab" style="left:417px;top:716px;width:162px;height:16px;border-radius:8px;background:#e9e9eb"></div>
<svg style="left:564.5px;top:722px" width="8" height="4.5" viewBox="0 0 8 4.5"><path d="M0 0h8L4 4.5z" fill="#222"/></svg>
<div class="ab" style="left:55px;top:746px;width:162px;height:16px;border-radius:8px;background:#e9e9eb"></div>
<svg style="left:202.5px;top:752px" width="8" height="4.5" viewBox="0 0 8 4.5"><path d="M0 0h8L4 4.5z" fill="#222"/></svg>
<div class="ab" style="left:236px;top:746px;width:162px;height:16px;border-radius:8px;background:#e9e9eb"></div>
<svg style="left:383.5px;top:752px" width="8" height="4.5" viewBox="0 0 8 4.5"><path d="M0 0h8L4 4.5z" fill="#222"/></svg>
<div class="ab" style="left:417px;top:746px;width:162px;height:16px;border-radius:8px;background:#e9e9eb"></div>
<svg style="left:564.5px;top:752px" width="8" height="4.5" viewBox="0 0 8 4.5"><path d="M0 0h8L4 4.5z" fill="#222"/></svg>
<div class="ab" style="left:55px;top:776px;width:162px;height:16px;border-radius:8px;background:#e9e9eb"></div>
<svg style="left:202.5px;top:782px" width="8" height="4.5" viewBox="0 0 8 4.5"><path d="M0 0h8L4 4.5z" fill="#222"/></svg>
<div class="ab" style="left:236px;top:776px;width:162px;height:16px;border-radius:8px;background:#e9e9eb"></div>
<svg style="left:383.5px;top:782px" width="8" height="4.5" viewBox="0 0 8 4.5"><path d="M0 0h8L4 4.5z" fill="#222"/></svg>
<div class="ab" style="left:417px;top:776px;width:162px;height:16px;border-radius:8px;background:#e9e9eb"></div>
<svg style="left:564.5px;top:782px" width="8" height="4.5" viewBox="0 0 8 4.5"><path d="M0 0h8L4 4.5z" fill="#222"/></svg>
<div class="ab" style="left:55px;top:806px;width:162px;height:16px;border-radius:8px;background:#e9e9eb"></div>
<svg style="left:202.5px;top:812px" width="8" height="4.5" viewBox="0 0 8 4.5"><path d="M0 0h8L4 4.5z" fill="#222"/></svg>
<div class="ab" style="left:236px;top:806px;width:162px;height:16px;border-radius:8px;background:#e9e9eb"></div>
<svg style="left:383.5px;top:812px" width="8" height="4.5" viewBox="0 0 8 4.5"><path d="M0 0h8L4 4.5z" fill="#222"/></svg>
<div class="ab" style="left:417px;top:806px;width:162px;height:16px;border-radius:8px;background:#e9e9eb"></div>
<svg style="left:564.5px;top:812px" width="8" height="4.5" viewBox="0 0 8 4.5"><path d="M0 0h8L4 4.5z" fill="#222"/></svg>
<div class="ab" style="left:55px;top:836px;width:162px;height:16px;border-radius:8px;background:#e9e9eb"></div>
<svg style="left:202.5px;top:842px" width="8" height="4.5" viewBox="0 0 8 4.5"><path d="M0 0h8L4 4.5z" fill="#222"/></svg>
<div class="ab" style="left:236px;top:836px;width:162px;height:16px;border-radius:8px;background:#e9e9eb"></div>
<svg style="left:383.5px;top:842px" width="8" height="4.5" viewBox="0 0 8 4.5"><path d="M0 0h8L4 4.5z" fill="#222"/></svg>
<div class="ab" style="left:417px;top:836px;width:162px;height:16px;border-radius:8px;background:#e9e9eb"></div>
<svg style="left:564.5px;top:842px" width="8" height="4.5" viewBox="0 0 8 4.5"><path d="M0 0h8L4 4.5z" fill="#222"/></svg>
<div class="ab" style="left:55px;top:866px;width:162px;height:16px;border-radius:8px;background:#e9e9eb"></div>
<svg style="left:202.5px;top:872px" width="8" height="4.5" viewBox="0 0 8 4.5"><path d="M0 0h8L4 4.5z" fill="#222"/></svg>
<div class="ab" style="left:236px;top:866px;width:162px;height:16px;border-radius:8px;background:#e9e9eb"></div>
<svg style="left:383.5px;top:872px" width="8" height="4.5" viewBox="0 0 8 4.5"><path d="M0 0h8L4 4.5z" fill="#222"/></svg>
<div class="ab" style="left:417px;top:866px;width:162px;height:16px;border-radius:8px;background:#e9e9eb"></div>
<svg style="left:564.5px;top:872px" width="8" height="4.5" viewBox="0 0 8 4.5"><path d="M0 0h8L4 4.5z" fill="#222"/></svg>
<div class="ab" style="left:55px;top:896px;width:162px;height:16px;border-radius:8px;background:#e9e9eb"></div>
<svg style="left:202.5px;top:902px" width="8" height="4.5" viewBox="0 0 8 4.5"><path d="M0 0h8L4 4.5z" fill="#222"/></svg>
<div class="ab" style="left:236px;top:896px;width:162px;height:16px;border-radius:8px;background:#e9e9eb"></div>
<svg style="left:383.5px;top:902px" width="8" height="4.5" viewBox="0 0 8 4.5"><path d="M0 0h8L4 4.5z" fill="#222"/></svg>
<div class="ab" style="left:417px;top:896px;width:162px;height:16px;border-radius:8px;background:#e9e9eb"></div>
<svg style="left:564.5px;top:902px" width="8" height="4.5" viewBox="0 0 8 4.5"><path d="M0 0h8L4 4.5z" fill="#222"/></svg>
<div class="ab" style="left:990px;top:196px;width:723px;height:30px;background:#356854;box-shadow:inset 0 0 0 1px #2b5444"></div>
<div class="ab" style="left:1170px;top:196px;width:1px;height:30px;background:#2f5e4b"></div>
<div class="t" style="left:990px;width:182px;text-align:center;top:203px;font-size:14px;color:#fff">遊玩場數</div>
<div class="ab" style="left:1351px;top:196px;width:1px;height:30px;background:#2f5e4b"></div>
<div class="t" style="left:1171px;width:182px;text-align:center;top:203px;font-size:14px;color:#fff">勝場</div>
<div class="ab" style="left:1532px;top:196px;width:1px;height:30px;background:#2f5e4b"></div>
<div class="t" style="left:1352px;width:182px;text-align:center;top:203px;font-size:14px;color:#fff">敗場</div>
<div class="ab" style="left:1713px;top:196px;width:1px;height:30px;background:#2f5e4b"></div>
<div class="t" style="left:1533px;width:182px;text-align:center;top:203px;font-size:14px;color:#fff">勝率</div>
<div class="t" style="left:989px;width:181px;text-align:center;top:238px;font-size:13px;color:#000;letter-spacing:0.3px">12</div>
<div class="t" style="left:1170px;width:181px;text-align:center;top:238px;font-size:13px;color:#000;letter-spacing:0.3px">10</div>
<div class="t" style="left:1351px;width:181px;text-align:center;top:238px;font-size:13px;color:#000;letter-spacing:0.3px">2</div>
<div class="t" style="left:1532px;width:181px;text-align:center;top:238px;font-size:13px;color:#000;letter-spacing:0.3px">83.33%</div>
<div class="ab" style="left:990px;top:289px;width:723px;height:31px;background:#356854;box-shadow:inset 0 0 0 1px #2b5444"></div>
<div class="ab" style="left:1170px;top:289px;width:1px;height:31px;background:#2f5e4b"></div>
<div class="t" style="left:990px;width:182px;text-align:center;top:296px;font-size:14px;color:#fff">硬幣正面</div>
<div class="ab" style="left:1351px;top:289px;width:1px;height:31px;background:#2f5e4b"></div>
<div class="t" style="left:1171px;width:182px;text-align:center;top:296px;font-size:14px;color:#fff">硬幣反面</div>
<div class="ab" style="left:1532px;top:289px;width:1px;height:31px;background:#2f5e4b"></div>
<div class="t" style="left:1352px;width:182px;text-align:center;top:296px;font-size:14px;color:#fff">硬幣勝率</div>
<div class="ab" style="left:1713px;top:289px;width:1px;height:31px;background:#2f5e4b"></div>
<div class="t" style="left:1533px;width:182px;text-align:center;top:296px;font-size:14px;color:#fff">先攻率</div>
<div class="t" style="left:989px;width:181px;text-align:center;top:328px;font-size:13px;color:#000;letter-spacing:0.3px">6</div>
<div class="t" style="left:1170px;width:181px;text-align:center;top:328px;font-size:13px;color:#000;letter-spacing:0.3px">6</div>
<div class="t" style="left:1351px;width:181px;text-align:center;top:328px;font-size:13px;color:#000;letter-spacing:0.3px">50.00%</div>
<div class="t" style="left:1532px;width:181px;text-align:center;top:328px;font-size:13px;color:#000;letter-spacing:0.3px">58.33%</div>
<div class="ab" style="left:990px;top:379px;width:723px;height:31px;background:#356854;box-shadow:inset 0 0 0 1px #2b5444"></div>
<div class="ab" style="left:1170px;top:379px;width:1px;height:31px;background:#2f5e4b"></div>
<div class="t" style="left:990px;width:182px;text-align:center;top:386px;font-size:14px;color:#fff">先攻勝率</div>
<div class="ab" style="left:1351px;top:379px;width:1px;height:31px;background:#2f5e4b"></div>
<div class="t" style="left:1171px;width:182px;text-align:center;top:386px;font-size:14px;color:#fff">後攻勝率</div>
<div class="ab" style="left:1532px;top:379px;width:1px;height:31px;background:#2f5e4b"></div>
<div class="t" style="left:1352px;width:182px;text-align:center;top:386px;font-size:14px;color:#fff">MD 勝負統計表</div>
<div class="ab" style="left:1713px;top:379px;width:1px;height:31px;background:#2f5e4b"></div>
<div class="t" style="left:1533px;width:182px;text-align:center;top:386px;font-size:14px;color:#fff">作者</div>
<div class="t" style="left:989px;width:181px;text-align:center;top:418px;font-size:13px;color:#000;letter-spacing:0.3px">83.33%</div>
<div class="t" style="left:1170px;width:181px;text-align:center;top:418px;font-size:13px;color:#000;letter-spacing:0.3px">80.00%</div>
<div class="t" style="left:1351px;width:181px;text-align:center;top:418px;font-size:13px;color:#000;letter-spacing:0.3px">v1.4</div>
<div class="t" style="left:1532px;width:181px;text-align:center;top:418px;font-size:13px;color:#000;letter-spacing:0.3px">Yotsuba</div>
<div class="ab" style="left:991px;top:470px;width:721px;height:388px;background:#fff;border:1px solid #9e9e9e"></div>
<div class="t" style="left:1011px;top:489px;font-size:20px;color:#757575">對手的牌組</div>
<svg style="left:1194px;top:523.4px" width="314" height="314" viewBox="0 0 314 314"><path d="M157 157L157.00 0.00A157 157 0 0 1 314.00 157.00Z" fill="#4285f4" stroke="#fff" stroke-width="0.7" stroke-opacity="0.5"/><path d="M157 157L314.00 157.00A157 157 0 0 1 292.97 235.50Z" fill="#ea4335" stroke="#fff" stroke-width="0.7" stroke-opacity="0.5"/><path d="M157 157L292.97 235.50A157 157 0 0 1 157.00 314.00Z" fill="#fbbc04" stroke="#fff" stroke-width="0.7" stroke-opacity="0.5"/><path d="M157 157L157.00 314.00A157 157 0 0 1 78.50 292.97Z" fill="#34a853" stroke="#fff" stroke-width="0.7" stroke-opacity="0.5"/><path d="M157 157L78.50 292.97A157 157 0 0 1 21.03 235.50Z" fill="#ff6d01" stroke="#fff" stroke-width="0.7" stroke-opacity="0.5"/><path d="M157 157L21.03 235.50A157 157 0 0 1 0.00 157.00Z" fill="#46bdc6" stroke="#fff" stroke-width="0.7" stroke-opacity="0.5"/><path d="M157 157L0.00 157.00A157 157 0 0 1 21.03 78.50Z" fill="#7baaf7" stroke="#fff" stroke-width="0.7" stroke-opacity="0.5"/><path d="M157 157L21.03 78.50A157 157 0 0 1 78.50 21.03Z" fill="#f07b72" stroke="#fff" stroke-width="0.7" stroke-opacity="0.5"/><path d="M157 157L78.50 21.03A157 157 0 0 1 157.00 0.00Z" fill="#fcd04f" stroke="#fff" stroke-width="0.7" stroke-opacity="0.5"/></svg>
<svg style="left:0;top:0" width="1920" height="930" viewBox="0 0 1920 930"><path d="M1012 536.5H1313.6" stroke="#757575" stroke-width="1"/><circle cx="1313.6" cy="536.5" r="1.6" fill="#9e9e9e"/><path d="M1012 575.3H1244.4" stroke="#757575" stroke-width="1"/><circle cx="1244.4" cy="575.3" r="1.6" fill="#9e9e9e"/><path d="M1012 641.8H1207.0" stroke="#757575" stroke-width="1"/><circle cx="1207.0" cy="641.8" r="1.6" fill="#9e9e9e"/><path d="M1012 719.4H1207.0" stroke="#757575" stroke-width="1"/><circle cx="1207.0" cy="719.4" r="1.6" fill="#9e9e9e"/><path d="M1012 786.4H1244.0" stroke="#757575" stroke-width="1"/><circle cx="1244.0" cy="786.4" r="1.6" fill="#9e9e9e"/><path d="M1012 824.7H1313.6" stroke="#757575" stroke-width="1"/><circle cx="1313.6" cy="824.7" r="1.6" fill="#9e9e9e"/><path d="M1457.0 575.3H1691" stroke="#757575" stroke-width="1"/><circle cx="1457.0" cy="575.3" r="1.6" fill="#9e9e9e"/><path d="M1495.6 719.4H1691" stroke="#757575" stroke-width="1"/><circle cx="1495.6" cy="719.4" r="1.6" fill="#9e9e9e"/><path d="M1426.0 810.2H1691" stroke="#757575" stroke-width="1"/><circle cx="1426.0" cy="810.2" r="1.6" fill="#9e9e9e"/></svg>
<div class="t" style="left:1012px;top:523px;font-size:12px;color:#222">千年</div>
<div class="t" style="left:1012px;top:537px;font-size:13px;color:#9e9e9e;letter-spacing:0.3px">8.3%</div>
<div class="t" style="left:1012px;top:562px;font-size:12px;color:#222">60GS</div>
<div class="t" style="left:1012px;top:576px;font-size:13px;color:#9e9e9e;letter-spacing:0.3px">8.3%</div>
<div class="t" style="left:1012px;top:628px;font-size:12px;color:#222">蛇眼</div>
<div class="t" style="left:1012px;top:642px;font-size:13px;color:#9e9e9e;letter-spacing:0.3px">8.3%</div>
<div class="t" style="left:1012px;top:706px;font-size:12px;color:#222">水晶機巧</div>
<div class="t" style="left:1012px;top:720px;font-size:13px;color:#9e9e9e;letter-spacing:0.3px">8.3%</div>
<div class="t" style="left:1012px;top:773px;font-size:12px;color:#222">天盃龍</div>
<div class="t" style="left:1012px;top:787px;font-size:13px;color:#9e9e9e;letter-spacing:0.3px">8.3%</div>
<div class="t" style="left:1012px;top:811px;font-size:12px;color:#222">雷精靈</div>
<div class="t" style="left:1012px;top:825px;font-size:13px;color:#9e9e9e;letter-spacing:0.3px">8.3%</div>
<div class="t" style="right:228px;top:562px;font-size:12px;color:#222">碼麗絲</div>
<div class="t" style="right:228px;top:576px;font-size:13px;color:#9e9e9e;letter-spacing:0.3px">25.0%</div>
<div class="t" style="right:228px;top:706px;font-size:12px;color:#222">相劍</div>
<div class="t" style="right:228px;top:720px;font-size:13px;color:#9e9e9e;letter-spacing:0.3px">8.3%</div>
<div class="t" style="right:228px;top:796px;font-size:12px;color:#222">烙印</div>
<div class="t" style="right:228px;top:810px;font-size:13px;color:#9e9e9e;letter-spacing:0.3px">16.7%</div>
</div>
<div class="ab" style="left:1848px;top:141px;width:16px;height:750px;background:#f8f9fa"></div>
<div class="ab" style="left:1859px;top:232px;width:4px;height:37px;border-radius:2px;background:#dadce0"></div>
<div class="ab" style="left:0;top:876px;width:1864px;height:16px;background:#f8f9fa;border-top:1px solid #dadada"></div>
<div class="ab" style="left:1848px;top:141px;width:1px;height:751px;background:#dadce0"></div>
<div class="ab" style="left:0;top:876px;width:46px;height:15px;background:#fff"></div>
<div class="ab" style="left:46px;top:876px;width:1px;height:15px;background:#c7c7c7"></div>
<div class="ab" style="left:50px;top:888px;width:915px;height:3px;border-radius:2px;background:#dadce0"></div>
<div class="ab" style="left:1864px;top:60px;width:56px;height:870px;background:#f9fbfd"></div>
<svg style="left:1882px;top:78px" width="19" height="19" viewBox="0 0 19 19"><rect x="0" y="0" width="19" height="19" rx="2" fill="#4285f4"/><rect x="0" y="14.5" width="14.5" height="4.5" fill="#34a853"/><path d="M14.5 4.5H19V14.5L14.5 19z" fill="#fbbc04"/><rect x="4.5" y="4.5" width="10" height="10" fill="#fff"/><path d="M0 14.5v2.5a2 2 0 0 0 2 2h2.5v-4.5z" fill="#188038"/><text x="9.5" y="12.7" font-size="7.5" font-family="Liberation Sans" font-weight="bold" text-anchor="middle" fill="#4285f4">31</text></svg>
<svg style="left:1882px;top:134px" width="19" height="18" viewBox="0 0 19 18"><rect width="19" height="18" rx="2" fill="#fbbc04"/><circle cx="9.5" cy="7.5" r="4" fill="#fff"/><rect x="7.5" y="11" width="4" height="3" fill="#fff"/></svg>
<svg style="left:1883px;top:190px" width="17" height="17" viewBox="0 0 20 20"><circle cx="9" cy="11" r="7.3" fill="none" stroke="#1a73e8" stroke-width="2.8"/><path d="M5.5 11l2.5 2.5 9-9" fill="none" stroke="#1a73e8" stroke-width="2.6"/></svg>
<svg style="left:1885px;top:246px" width="14" height="17" viewBox="0 0 18 19"><circle cx="9" cy="4.5" r="4" fill="#0b57d0"/><path d="M1 19v-4a5 5 0 0 1 5-5h6a5 5 0 0 1 5 5v4z" fill="#1a5fd6"/><path d="M1 15a5 5 0 0 1 5-5h6a5 5 0 0 1 5 5v1H1z" fill="#0b57d0"/></svg>
<svg style="left:1885px;top:301px" width="14" height="19" viewBox="0 0 20 29"><path d="M10 1a9 9 0 0 1 9 9c0 6-9 18-9 18S1 16 1 10a9 9 0 0 1 9-9z" fill="#34a853"/><path d="M10 1a9 9 0 0 1 7.5 4L3 17C1.8 14.5 1 12 1 10a9 9 0 0 1 9-9z" fill="#ea4335"/><path d="M17.5 5A9 9 0 0 1 19 10c0 2-1 4.5-2.5 7L6.5 10z" fill="#4285f4"/><path d="M3 17L10 10 13 14C11.5 17 10 19 10 19z" fill="#fbbc04"/><circle cx="10" cy="10" r="3.2" fill="#fff"/></svg>
<div class="ab" style="left:1881px;top:355px;width:21px;height:1px;background:#c7c7c7"></div>
<svg style="left:1884px;top:392px" width="15" height="15" viewBox="0 0 15 15"><path d="M7.5 0v15M0 7.5h15" stroke="#1f1f1f" stroke-width="1.8"/></svg>
<svg style="left:1889px;top:897px" width="7" height="10" viewBox="0 0 7 10"><path d="M1.2 .8l4.2 4.2-4.2 4.2" fill="none" stroke="#444746" stroke-width="1.7"/></svg>
<svg style="left:57px;top:909px" width="10" height="10" viewBox="0 0 10 10"><path d="M5 0v10M0 5h10" stroke="#444746" stroke-width="1.7"/></svg>
<svg style="left:95px;top:908px" width="14" height="11" viewBox="0 0 14 11"><path d="M0 1h14M0 5.5h14M0 10h14" stroke="#444746" stroke-width="1.6"/></svg>
<div class="t" style="left:146px;top:907px;font-size:14px;color:#444746">牌組參照</div>
<svg style="left:214px;top:912px" width="10" height="5" viewBox="0 0 10 5"><path d="M0 0h10L5 5z" fill="#444746"/></svg>
<div class="t" style="left:247px;top:907px;font-size:14px;color:#444746">複製用範本</div>
<svg style="left:330px;top:912px" width="10" height="5" viewBox="0 0 10 5"><path d="M0 0h10L5 5z" fill="#444746"/></svg>
<div class="ab" style="left:351px;top:894px;width:117px;height:36px;background:#e1e9f7"></div>
<div class="t" style="left:363px;top:907px;font-size:14px;color:#0b57d0;-webkit-text-stroke:0.5px #0b57d0;letter-spacing:0.2px">Season 43</div>
<svg style="left:447px;top:912px" width="10" height="5" viewBox="0 0 10 5"><path d="M0 0h10L5 5z" fill="#0b57d0"/></svg>
</body></html>
